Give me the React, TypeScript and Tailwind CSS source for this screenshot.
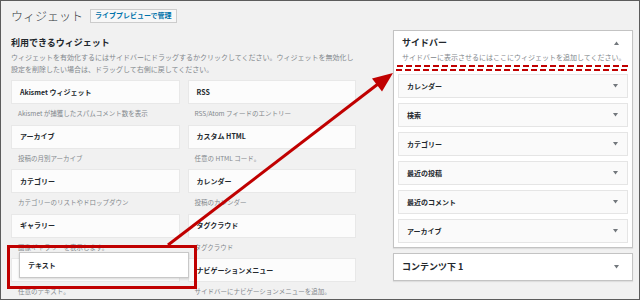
const available = [
  { title: 'Akismet ウィジェット', desc: 'Akismet が捕獲したスパムコメント数を表示' },
  { title: 'RSS', desc: 'RSS/Atom フィードのエントリー' },
  { title: 'アーカイブ', desc: '投稿の月別アーカイブ' },
  { title: 'カスタム HTML', desc: '任意の HTML コード。' },
  { title: 'カテゴリー', desc: 'カテゴリーのリストやドロップダウン' },
  { title: 'カレンダー', desc: '投稿のカレンダー' },
  { title: 'ギャラリー', desc: '画像ギャラリーを表示します。' },
  { title: 'タグクラウド', desc: 'タグクラウド' },
  { title: '', desc: '任意のテキスト。' },
  { title: 'ナビゲーションメニュー', desc: 'サイドバーにナビゲーションメニューを追加。' },
]

const sidebarWidgets = ['カレンダー', '検索', 'カテゴリー', '最近の投稿', '最近のコメント', 'アーカイブ']

function Caret({ up = false }: { up?: boolean }) {
  return (
    <svg width="5" height="4" viewBox="0 0 5 4" className="shrink-0">
      <path d={up ? 'M0 4 L2.5 0.5 L5 4 Z' : 'M0 0 L5 0 L2.5 3.5 Z'} fill="#72777c" />
    </svg>
  )
}

export default function App() {
  return (
    <div className="relative flex h-[300px] w-[640px] overflow-hidden border border-[#5c5c5c] bg-[#f1f1f1] font-['Noto_Sans_CJK_JP',sans-serif] text-[#23282d]">
      <div className="w-[355px] shrink-0 pl-[10px] pt-[7px]">
        <div className="flex h-[15px] items-center gap-[7px]">
          <h1 className="text-[12px] leading-none font-light text-[#32373c]">ウィジェット</h1>
          <span className="flex h-[14px] items-center border border-[#cccccc] bg-[#f7f7f7] px-[4px] text-[7px] font-semibold text-[#0073aa]">
            ライブプレビューで管理
          </span>
        </div>

        <h2 className="mt-[14px] text-[9px] leading-[11px] font-bold">利用できるウィジェット</h2>
        <p className="mt-[3px] text-[7px] leading-[12px] text-[#82878c]">
          ウィジェットを有効化するにはサイドバーにドラッグするかクリックしてください。ウィジェットを無効化し
          <br />
          設定を削除したい場合は、ドラッグして右側に戻してください。
        </p>

        <div className="mt-[5px] grid grid-cols-2 gap-x-[8px]">
          {available.map((w, i) => (
            <div key={i}>
              <div className="flex h-[24px] items-center border border-[#e8e8e8] bg-[#fcfcfc] pl-[8px] text-[7px] font-bold">
                {w.title}
              </div>
              <div className="flex h-[20.5px] items-center pl-[7px] text-[6.5px] text-[#82878c]">{w.desc}</div>
            </div>
          ))}
        </div>
      </div>

      <div className="ml-[37px] mt-[29px] w-[240px] shrink-0">
        <div className="border border-[#c3c3c3] bg-white pb-[4px] shadow-[0_1px_1px_rgba(0,0,0,0.08)]">
          <div className="flex items-center justify-between pl-[8px] pr-[13px] pt-[6px]">
            <span className="text-[9px] leading-[12px] font-bold">サイドバー</span>
            <Caret up />
          </div>
          <p className="mt-[2px] pl-[8px] text-[7px] leading-[12px] text-[#82878c]">
            サイドバーに表示させるにはここにウィジェットを追加してください。
          </p>
          <div className="mt-[11px] flex flex-col gap-[5px] px-[4px]">
            {sidebarWidgets.map((name) => (
              <div
                key={name}
                className="flex h-[24px] items-center justify-between border border-[#e5e5e5] bg-[#fafafa] pl-[8px] pr-[9px] text-[7px] font-semibold"
              >
                {name}
                <Caret />
              </div>
            ))}
          </div>
        </div>

        <div className="mt-[5px] flex h-[28px] items-center justify-between border border-[#c3c3c3] bg-white pl-[8px] pr-[13px] shadow-[0_1px_1px_rgba(0,0,0,0.08)]">
          <span className="text-[9px] font-bold">コンテンツ下 1</span>
          <Caret />
        </div>
      </div>

      {/* drag annotation */}
      <div className="pointer-events-none absolute -inset-px">
        <div className="absolute left-[19px] top-[252px] flex h-[26px] w-[170px] items-center border border-[#c8c8c8] bg-white pl-[8px] text-[7px] font-bold shadow-[0_1px_2px_rgba(0,0,0,0.15)]">
          テキスト
        </div>
        <svg width="640" height="300" className="absolute left-0 top-0">
          <rect x="8.5" y="246.5" width="187" height="41" fill="none" stroke="#c00000" strokeWidth="3" />
          <line x1="168" y1="245" x2="378" y2="84" stroke="#c00000" strokeWidth="3" />
          <polygon points="393,73 382,91.5 372,78.5" fill="#c00000" />
          <rect x="397" y="66" width="230" height="4" fill="none" stroke="#c00000" strokeWidth="2" strokeDasharray="6 3" />
        </svg>
      </div>
    </div>
  )
}
